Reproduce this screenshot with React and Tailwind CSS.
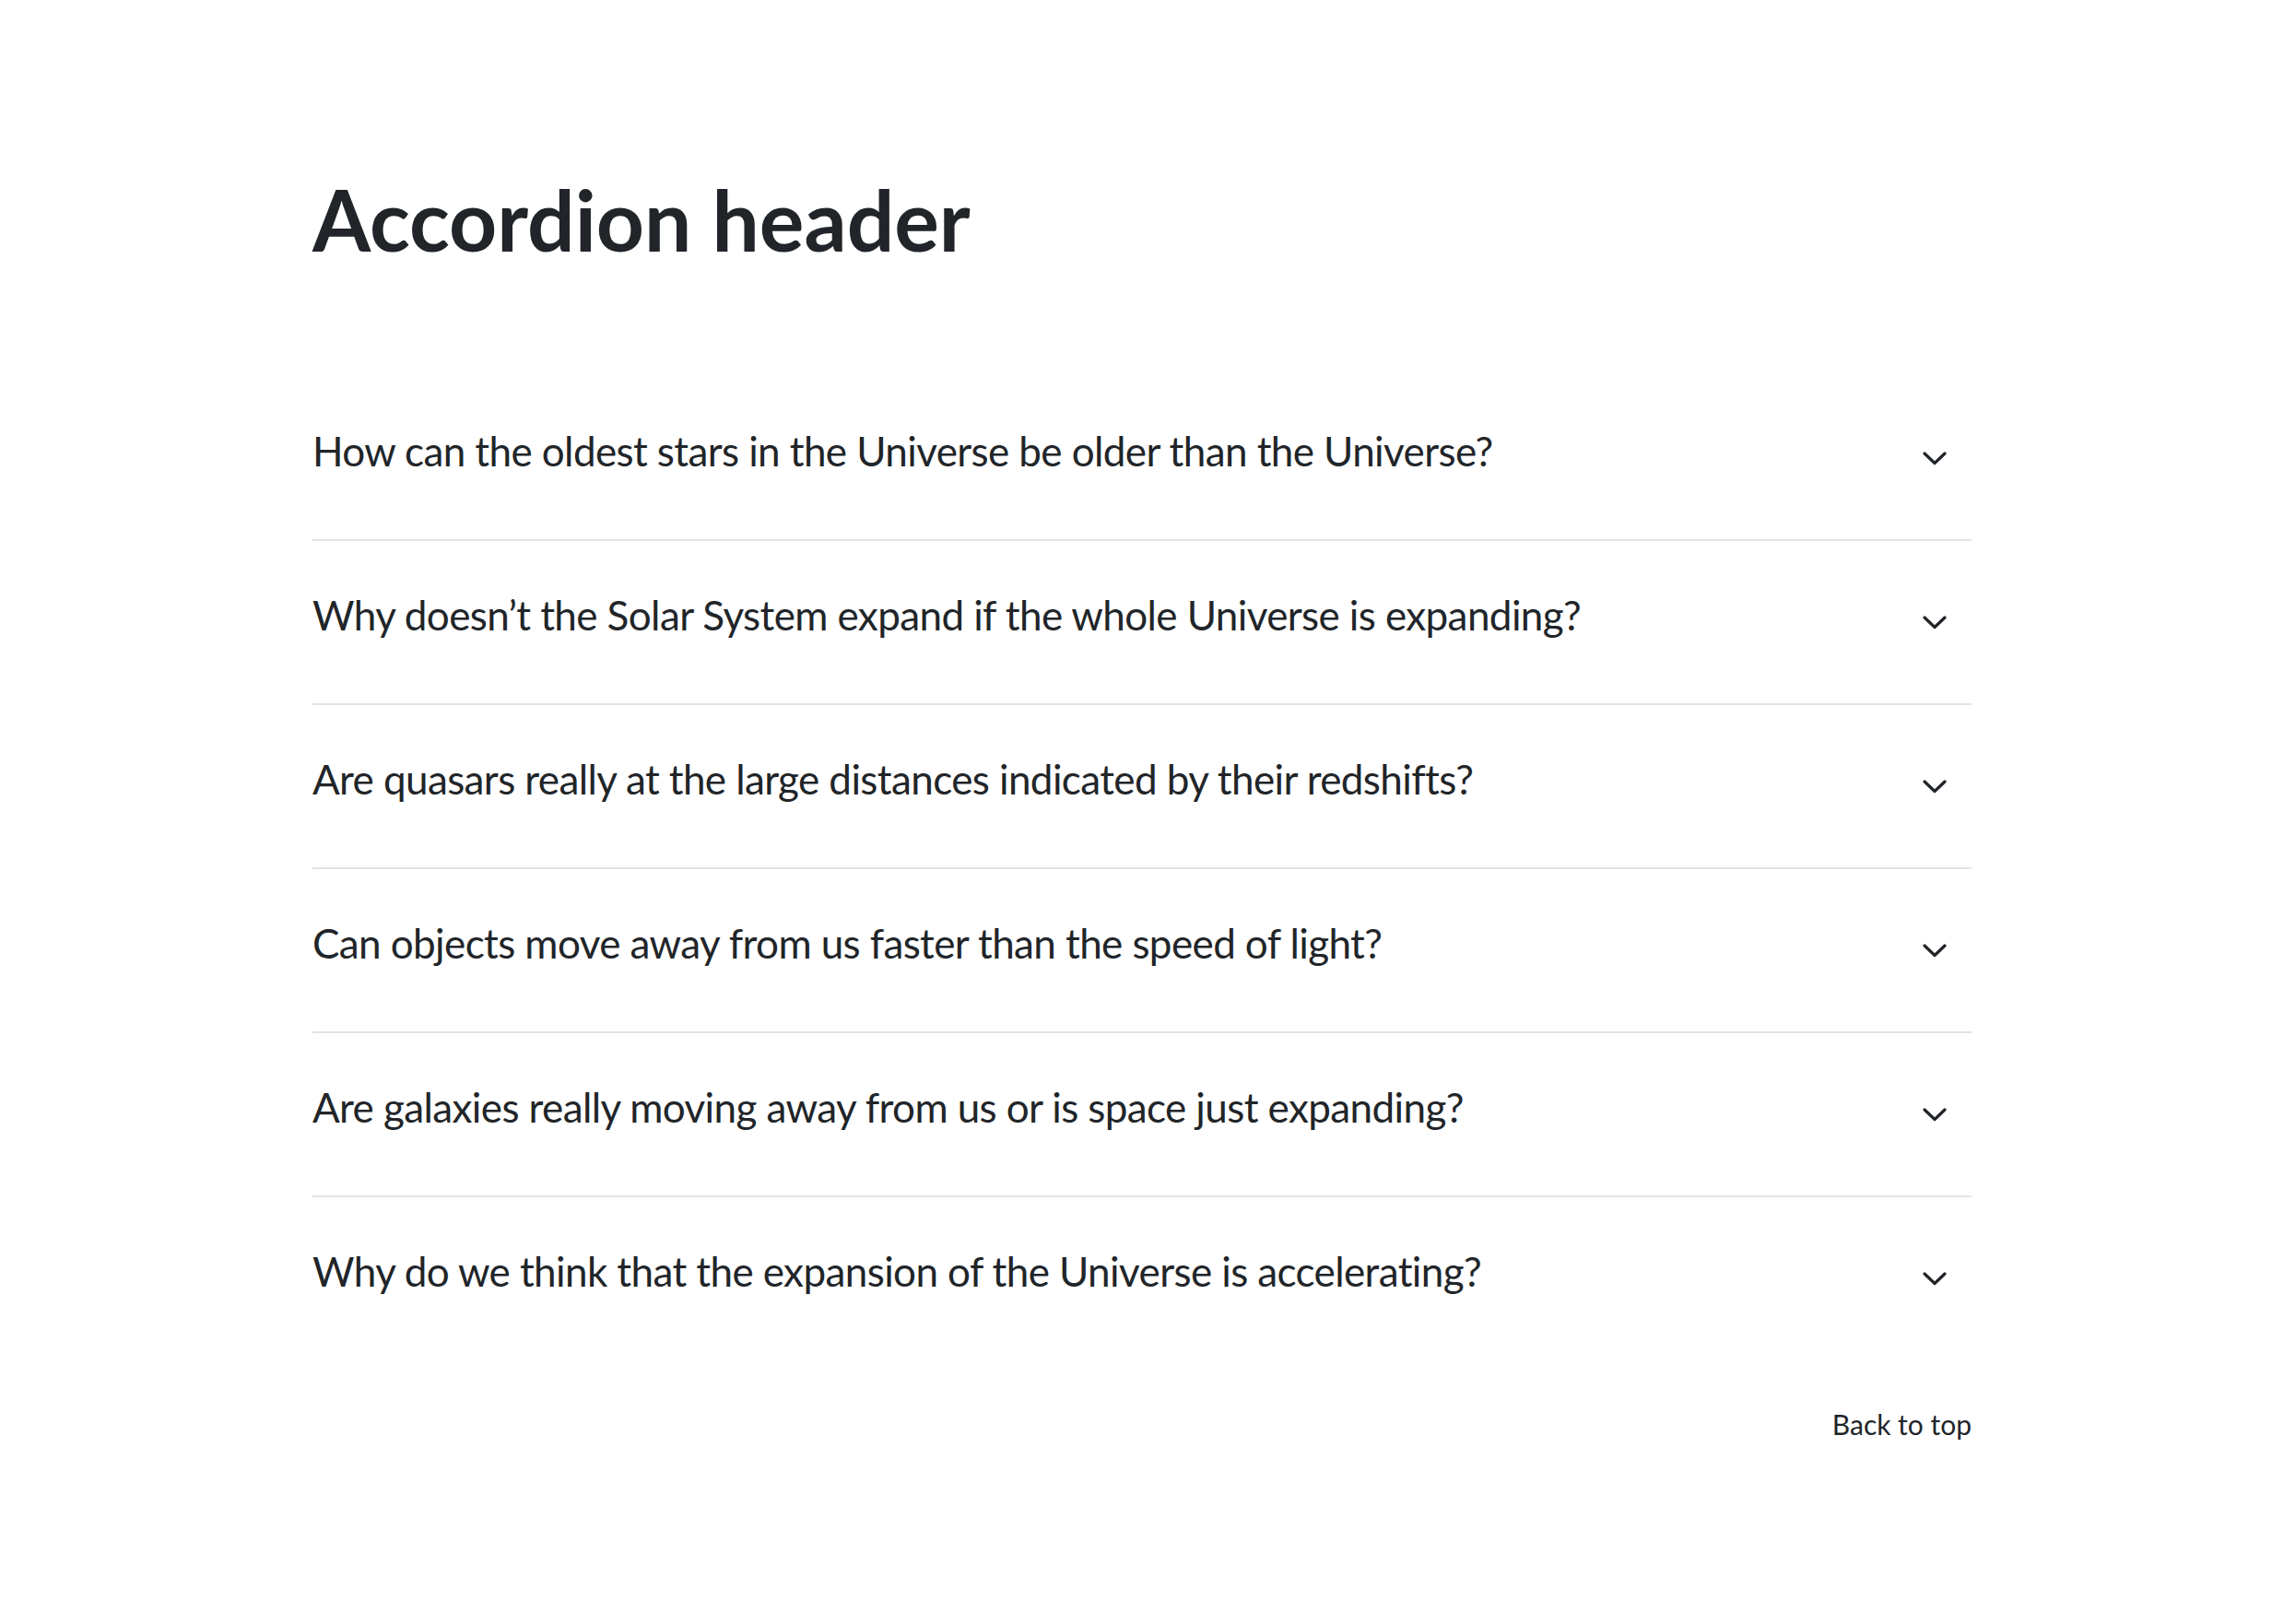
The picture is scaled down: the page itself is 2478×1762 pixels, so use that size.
import React from 'react';

const questions = [
  'How can the oldest stars in the Universe be older than the Universe?',
  'Why doesn\u2019t the Solar System expand if the whole Universe is expanding?',
  'Are quasars really at the large distances indicated by their redshifts?',
  'Can objects move away from us faster than the speed of light?',
  'Are galaxies really moving away from us or is space just expanding?',
  'Why do we think that the expansion of the Universe is accelerating?',
];

function Chevron() {
  return (
    <svg width="26" height="15" viewBox="0 0 26 15" fill="none" className="shrink-0">
      <path d="M2 2 L13 12.5 L24 2" stroke="#212529" strokeWidth="3.2" strokeLinecap="round" strokeLinejoin="round" />
    </svg>
  );
}

function AccordionItem({ text, last }) {
  return (
    <div className={last ? 'h-[176px]' : 'h-[178px] border-b-2 border-[#e1e3e8]'}>
      <button className="flex h-[176px] w-full items-center justify-between pr-[27px] text-left">
        <span className="pb-[15px] text-[44px] leading-[1.2] tracking-[-0.6px] text-[#212529]">{text}</span>
        <Chevron />
      </button>
    </div>
  );
}

export default function App() {
  return (
    <div className="min-h-screen bg-white font-['Lato',sans-serif]">
      <div className="mx-auto w-[1800px] pt-[183px]">
        <h1 className="text-[91px] font-bold leading-[1.2] text-[#212529]">Accordion header</h1>
        <div className="mt-[117px]">
          {questions.map((q, i) => (
            <AccordionItem key={q} text={q} last={i === questions.length - 1} />
          ))}
        </div>
        <div className="mt-[52px] text-right">
          <a href="#" className="text-[30px] leading-[1.2] text-[#212529]">Back to top</a>
        </div>
      </div>
    </div>
  );
}
